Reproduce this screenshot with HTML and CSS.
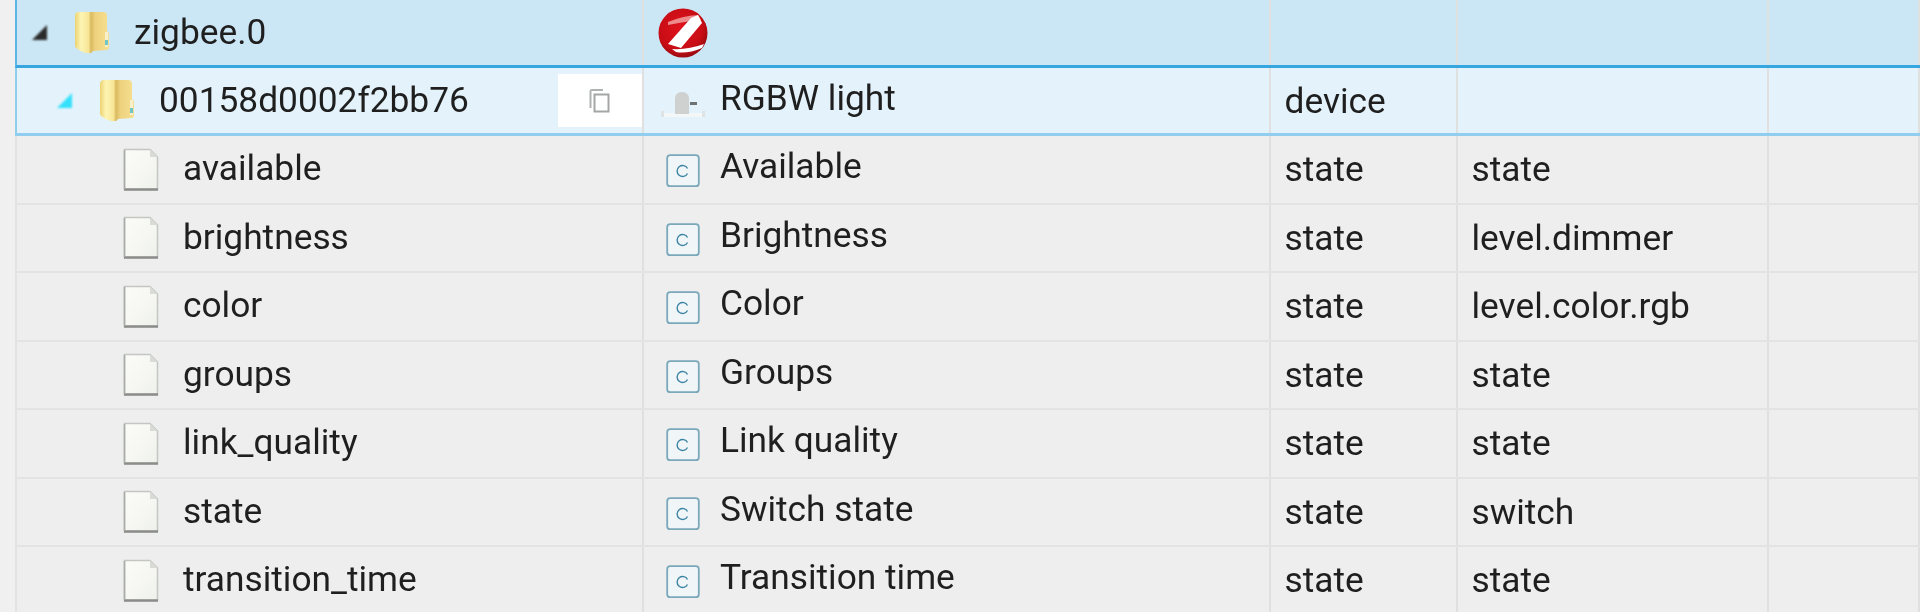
FILE: index.html
```html
<!DOCTYPE html>
<html lang="en">
<head>
<meta charset="utf-8">
<title>Objects</title>
<link rel="stylesheet" href="styles.css">
</head>
<body>
<svg class="defs" width="0" height="0" aria-hidden="true">
  <defs>
    <linearGradient id="fg" x1="0" x2="1" y1="0" y2="0">
      <stop offset="0" stop-color="#ecd272"/><stop offset=".18" stop-color="#fdf5b4"/>
      <stop offset=".4" stop-color="#f8e596"/><stop offset=".47" stop-color="#d9ba60"/>
      <stop offset=".6" stop-color="#eed27e"/><stop offset="1" stop-color="#f6df90"/>
    </linearGradient>
    <linearGradient id="pg" x1="0" x2="1" y1="0" y2="1">
      <stop offset="0" stop-color="#fbfcf8"/><stop offset=".55" stop-color="#f6f7f2"/><stop offset="1" stop-color="#eef0ea"/>
    </linearGradient>
    <radialGradient id="zg" cx=".45" cy=".4" r=".65">
      <stop offset="0" stop-color="#e0121c"/><stop offset=".7" stop-color="#c70d15"/><stop offset="1" stop-color="#8c0a0f"/>
    </radialGradient>
    <symbol id="folder" viewBox="0 0 36 43">
      <path d="M1 5Q1 1 5 1H29Q33 1 33 5V20L35 22V37Q35 38 33 39L19 40Q18 43 13 42Q7 41 4 38Q1 37 1 34Z" fill="url(#fg)"/>
      <path d="M31 21H34V36H31Z" fill="#f8f0cc"/>
      <path d="M31 29H34V34H31Z" fill="#6fc5c8"/>
    </symbol>
    <symbol id="file" viewBox="0 0 36 43">
      <path d="M1.5 1.5H27L34.5 9V41.5H1.5Z" fill="url(#pg)" stroke="#c4c6c2" stroke-width="1.5"/>
      <path d="M27 1.5V9H34.5Z" fill="#d9dbd7"/>
      <path d="M1 41.5H35" stroke="#8b8d8a" stroke-width="2.4"/>
      <path d="M1.5 2V41" stroke="#a9aba7" stroke-width="1.6"/>
    </symbol>
    <symbol id="state" viewBox="0 0 34 34">
      <rect x="1.200" y="1.200" width="31.600" height="31" rx="3" fill="#f0f6f8" stroke="#7ba8ba" stroke-width="1.800"/>
      <path d="M21.500 14.500A5.500 5.500 0 1 0 21.500 19.500" fill="none" stroke="#3c84a5" stroke-width="1.400"/>
    </symbol>
  </defs>
</svg>
<main class="tree">
  <div class="row row-root">
    <div class="cell name level-0"><span class="toggle dark"></span><svg class="ico"><use href="#folder"/></svg><span>zigbee.0</span></div>
    <div class="cell title">
      <svg class="zig" viewBox="0 0 50 50"><circle cx="25" cy="25" r="24.500" fill="url(#zg)"/><path d="M10 14Q24 8 40 7L43 12 Q30 13 10 17Z" fill="#ec8a8c"/><path d="M33 10L40 7 44 15 23 40 10 36Z" fill="#fff"/><path d="M14 41Q30 42 46 36L44 40Q30 46 18 44Z" fill="#fff"/></svg>
    </div>
    <div class="cell"></div><div class="cell"></div><div class="cell"></div>
  </div>
  <div class="row row-device">
    <div class="cell name level-1"><span class="toggle cyan"></span><svg class="ico"><use href="#folder"/></svg><span>00158d0002f2bb76</span>
      <button class="copy" type="button" aria-label="Copy"><svg viewBox="0 0 24 26" width="24" height="26"><path d="M3.500 20V3Q3.500 2 5 2H16" fill="none" stroke="#b0b2b2" stroke-width="2"/><rect x="7.500" y="6.500" width="14" height="17" fill="#fff" stroke="#a4a6a6" stroke-width="2"/></svg></button>
    </div>
    <div class="cell title">
      <svg class="dev" viewBox="0 0 46 28"><path d="M1 23H45V27H1Z" fill="#f4f7f8"/><path d="M15 24V9Q15 2 22 2Q29 2 29 9V24Z" fill="#cfd1d1"/><path d="M30 12H37V15H30Z" fill="#6f7273"/><path d="M1 21H4V27H1ZM42 21H45V27H42Z" fill="#dfe3e4"/></svg>
      <span>RGBW light</span>
    </div>
    <div class="cell type">device</div><div class="cell"></div><div class="cell"></div>
  </div>
  <div class="row">
    <div class="cell name level-2"><svg class="ico"><use href="#file"/></svg><span>available</span></div>
    <div class="cell title"><svg class="st"><use href="#state"/></svg><span>Available</span></div>
    <div class="cell type">state</div><div class="cell type">state</div><div class="cell"></div>
  </div>
  <div class="row">
    <div class="cell name level-2"><svg class="ico"><use href="#file"/></svg><span>brightness</span></div>
    <div class="cell title"><svg class="st"><use href="#state"/></svg><span>Brightness</span></div>
    <div class="cell type">state</div><div class="cell type">level.dimmer</div><div class="cell"></div>
  </div>
  <div class="row">
    <div class="cell name level-2"><svg class="ico"><use href="#file"/></svg><span>color</span></div>
    <div class="cell title"><svg class="st"><use href="#state"/></svg><span>Color</span></div>
    <div class="cell type">state</div><div class="cell type">level.color.rgb</div><div class="cell"></div>
  </div>
  <div class="row">
    <div class="cell name level-2"><svg class="ico"><use href="#file"/></svg><span>groups</span></div>
    <div class="cell title"><svg class="st"><use href="#state"/></svg><span>Groups</span></div>
    <div class="cell type">state</div><div class="cell type">state</div><div class="cell"></div>
  </div>
  <div class="row">
    <div class="cell name level-2"><svg class="ico"><use href="#file"/></svg><span>link_quality</span></div>
    <div class="cell title"><svg class="st"><use href="#state"/></svg><span>Link quality</span></div>
    <div class="cell type">state</div><div class="cell type">state</div><div class="cell"></div>
  </div>
  <div class="row">
    <div class="cell name level-2"><svg class="ico"><use href="#file"/></svg><span>state</span></div>
    <div class="cell title"><svg class="st"><use href="#state"/></svg><span>Switch state</span></div>
    <div class="cell type">state</div><div class="cell type">switch</div><div class="cell"></div>
  </div>
  <div class="row">
    <div class="cell name level-2"><svg class="ico"><use href="#file"/></svg><span>transition_time</span></div>
    <div class="cell title"><svg class="st"><use href="#state"/></svg><span>Transition time</span></div>
    <div class="cell type">state</div><div class="cell type">state</div><div class="cell"></div>
  </div>
</main>
</body>
</html>
```
FILE: styles.css
```css
html, body { margin: 0; height: 612px; overflow: hidden; background: #f0f0f0; }
.defs { position: absolute; }
.tree {
  margin-left: 15px;
  font-family: Roboto, "Liberation Sans", sans-serif;
  font-size: 35.3px;
  color: #1f1f1f;
  filter: blur(0.6px);
}
.row {
  display: grid;
  grid-template-columns: 627px 627px 187px 311px 1fr;
  height: 68.5px;
  box-sizing: border-box;
  background: #eeeeee;
  border-bottom: 2px solid #e3e3e3;
  border-left: 2px solid #e3e3e3;
}
.row-root {
  height: 68px;
  background: #cbe7f5;
  border-left-color: #5bb6e6;
  border-bottom: 3px solid #36a6e0;
}
.row-device {
  height: 68px;
  background: #e4f3fb;
  border-left-color: #8fcdee;
  border-bottom: 3px solid #90cdee;
}
.cell {
  position: relative;
  display: flex;
  align-items: center;
  min-width: 0;
  border-right: 2px solid #e0e0e0;
  box-sizing: border-box;
}
.name > span:last-of-type { margin-top: -2px; }
.level-0 { padding-left: 15px; }
.level-1 { padding-left: 40px; }
.level-2 { padding-left: 106px; }
.toggle {
  width: 0; height: 0;
  margin-right: 26px;
  border-style: solid;
  border-width: 0 0 15px 15px;
  border-color: transparent;
  filter: blur(0.8px);
}
.toggle.dark { border-bottom-color: #2b2b2b; }
.toggle.cyan { border-bottom-color: #35e0fb; }
.ico { width: 36px; height: 43px; margin-right: 24px; flex: none; }
.toggle + .ico { margin-left: 1px; }
.title { padding-left: 22px; gap: 0; }
.zig { width: 50px; height: 50px; margin-left: -8px; }
.dev { width: 46px; height: 28px; margin: 6px 14px 0 -6px; }
.st { width: 34px; height: 34px; margin-right: 20px; margin-top: 4px; }
.title span { margin-top: -6px; }
.type { padding-left: 13.5px; }
.copy {
  position: absolute;
  right: 0;
  top: 6px;
  width: 84px;
  height: 53px;
  padding: 0 2px 0 0;
  border: 0;
  background: #fff;
  display: flex;
  align-items: center;
  justify-content: center;
}
```
